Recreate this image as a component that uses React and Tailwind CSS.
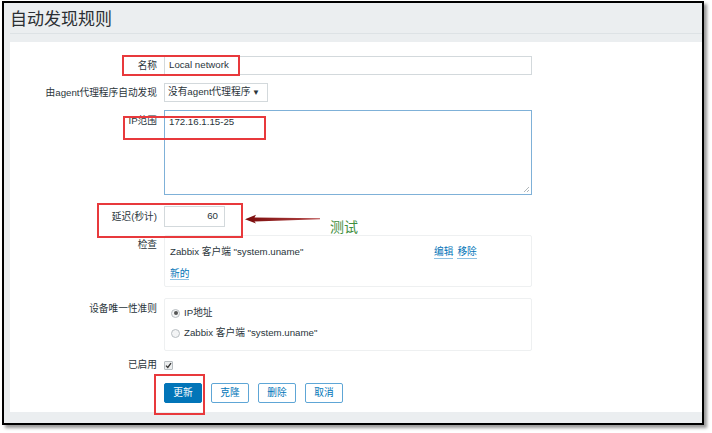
import React from "react";

const font = "font-['Liberation_Sans','Noto_Sans_CJK_SC',sans-serif]";

function Row({ label, labelPad = "pt-[4px]", className = "", children }) {
  return (
    <div className={"flex gap-[7px] " + className}>
      <div className={"w-[147px] shrink-0 text-right leading-[12px] " + labelPad}>{label}</div>
      <div>{children}</div>
    </div>
  );
}

function Radio({ checked, children }) {
  return (
    <div className="flex items-center gap-[4px] h-[12px]">
      <span className="w-[9px] h-[9px] rounded-full border border-[#b8bec2] bg-[#f3f4f5] flex items-center justify-center">
        {checked && <span className="w-[4px] h-[4px] rounded-full bg-[#555]" />}
      </span>
      <span>{children}</span>
    </div>
  );
}

function Btn({ primary, children }) {
  return (
    <div
      className={
        "w-[38px] h-[20px] rounded-[2px] flex items-center justify-center border " +
        (primary ? "bg-[#0275b8] border-[#0275b8] text-white" : "bg-white border-[#5ea6d6] text-[#0275b8]")
      }
    >
      {children}
    </div>
  );
}

export default function App() {
  return (
    <div className={"relative w-[712px] h-[433px] bg-white text-[9.7px] text-[#2a353b] " + font}>
      <div className="ml-[2px] mt-[1px] w-[702px] h-[424px] border-2 border-black bg-[#ebeef0] shadow-[3px_3px_3px_rgba(0,0,0,0.4)] overflow-hidden">
        {/* header */}
        <div className="ml-[6px] h-[31px] border-b border-[#dde2e5] flex items-center pt-[4px] text-[17px] leading-[20px] text-[#2b2f33]">
          自动发现规则
        </div>

        {/* form panel */}
        <div className="ml-[6px] mt-[8px] h-[370px] bg-white pt-[14px]">
          <Row label="名称">
            <div className="w-[368px] h-[19px] border border-[#d3d9dc] pl-[4px] flex items-center">Local network</div>
          </Row>

          <Row label="由agent代理程序自动发现" className="mt-[8px]">
            <div className="w-[104px] h-[19px] border border-[#d3d9dc] pl-[3px] pr-[7px] flex items-center justify-between">
              <span>没有agent代理程序</span>
              <span className="text-[8px]">▼</span>
            </div>
          </Row>

          <Row label="IP范围" labelPad="pt-[5px]" className="mt-[8px]">
            <div className="relative w-[368px] h-[85px] border border-[#7fb1d8] pl-[4px] pt-[5px] leading-[12px]">
              172.16.1.15-25
              <svg className="absolute right-[1px] bottom-[1px]" width="7" height="7" viewBox="0 0 7 7">
                <path d="M6 1 L1 6 M6 4 L4 6" stroke="#9aa3a8" strokeWidth="0.8" />
              </svg>
            </div>
          </Row>

          <Row label="延迟(秒计)" className="mt-[11px]" labelPad="pt-[5px]">
            <div className="w-[61px] h-[21px] border border-[#d3d9dc] pr-[6px] flex items-center justify-end">60</div>
          </Row>

          <Row label="检查" className="mt-[8px]">
            <div className="w-[368px] h-[52px] border border-[#eef0f1] rounded-[2px] px-[5px] pt-[10px] leading-[12px]">
              <div className="flex">
                <span className="w-[264px]">Zabbix 客户端 "system.uname"</span>
                <span className="flex gap-[4px] text-[#0275b8]">
                  <span className="border-b border-[#8ec1e2]">编辑</span>
                  <span className="border-b border-[#8ec1e2]">移除</span>
                </span>
              </div>
              <div className="mt-[9px]">
                <span className="text-[#0275b8] border-b border-[#8ec1e2]">新的</span>
              </div>
            </div>
          </Row>

          <Row label="设备唯一性准则" className="mt-[11px]" labelPad="pt-[5px]">
            <div className="w-[368px] h-[53px] border border-[#eef0f1] rounded-[2px] pl-[6px] pt-[8px] flex flex-col gap-[8px]">
              <Radio checked>IP地址</Radio>
              <Radio>Zabbix 客户端 "system.uname"</Radio>
            </div>
          </Row>

          <Row label="已启用" className="mt-[8px]" labelPad="pt-[0px]">
            <div className="mt-[2px] w-[9px] h-[9px] border border-[#b8bec2] bg-[#eceeef] rounded-[1px] flex items-center justify-center">
              <svg width="7" height="7" viewBox="0 0 7 7">
                <path d="M1 3.6 L2.8 5.5 L6 1.2" stroke="#333" strokeWidth="1.3" fill="none" />
              </svg>
            </div>
          </Row>

          <Row label="" className="mt-[12px]">
            <div className="flex gap-[9px]">
              <Btn primary>更新</Btn>
              <Btn>克隆</Btn>
              <Btn>删除</Btn>
              <Btn>取消</Btn>
            </div>
          </Row>
        </div>
      </div>

      {/* annotations */}
      <div className="absolute left-[122px] top-[54px] w-[118px] h-[21px] border-2 border-[#e8393c]" />
      <div className="absolute left-[123px] top-[115px] w-[143px] h-[24px] border-2 border-[#e8393c]" />
      <div className="absolute left-[97px] top-[202px] w-[146px] h-[35px] border-2 border-[#e8393c]" />
      <div className="absolute left-[154px] top-[373px] w-[51px] h-[41px] border-2 border-[#e8393c]" />

      <svg className="absolute left-[244px] top-[210px]" width="80" height="16" viewBox="0 0 80 16">
        <defs>
          <linearGradient id="ar" x1="0" x2="1" y1="0" y2="0">
            <stop offset="0" stopColor="#7a0a0a" />
            <stop offset="1" stopColor="#b54848" />
          </linearGradient>
        </defs>
        <path d="M1 8.3 L12 3.8 L10.5 6.4 L76 7.2 L76 8.2 L10.5 10.4 L12 12.6 Z" fill="url(#ar)" />
      </svg>
      <div className="absolute left-[330px] top-[218px] text-[14px] leading-[16px] text-[#3f8f3f]">测试</div>
    </div>
  );
}
